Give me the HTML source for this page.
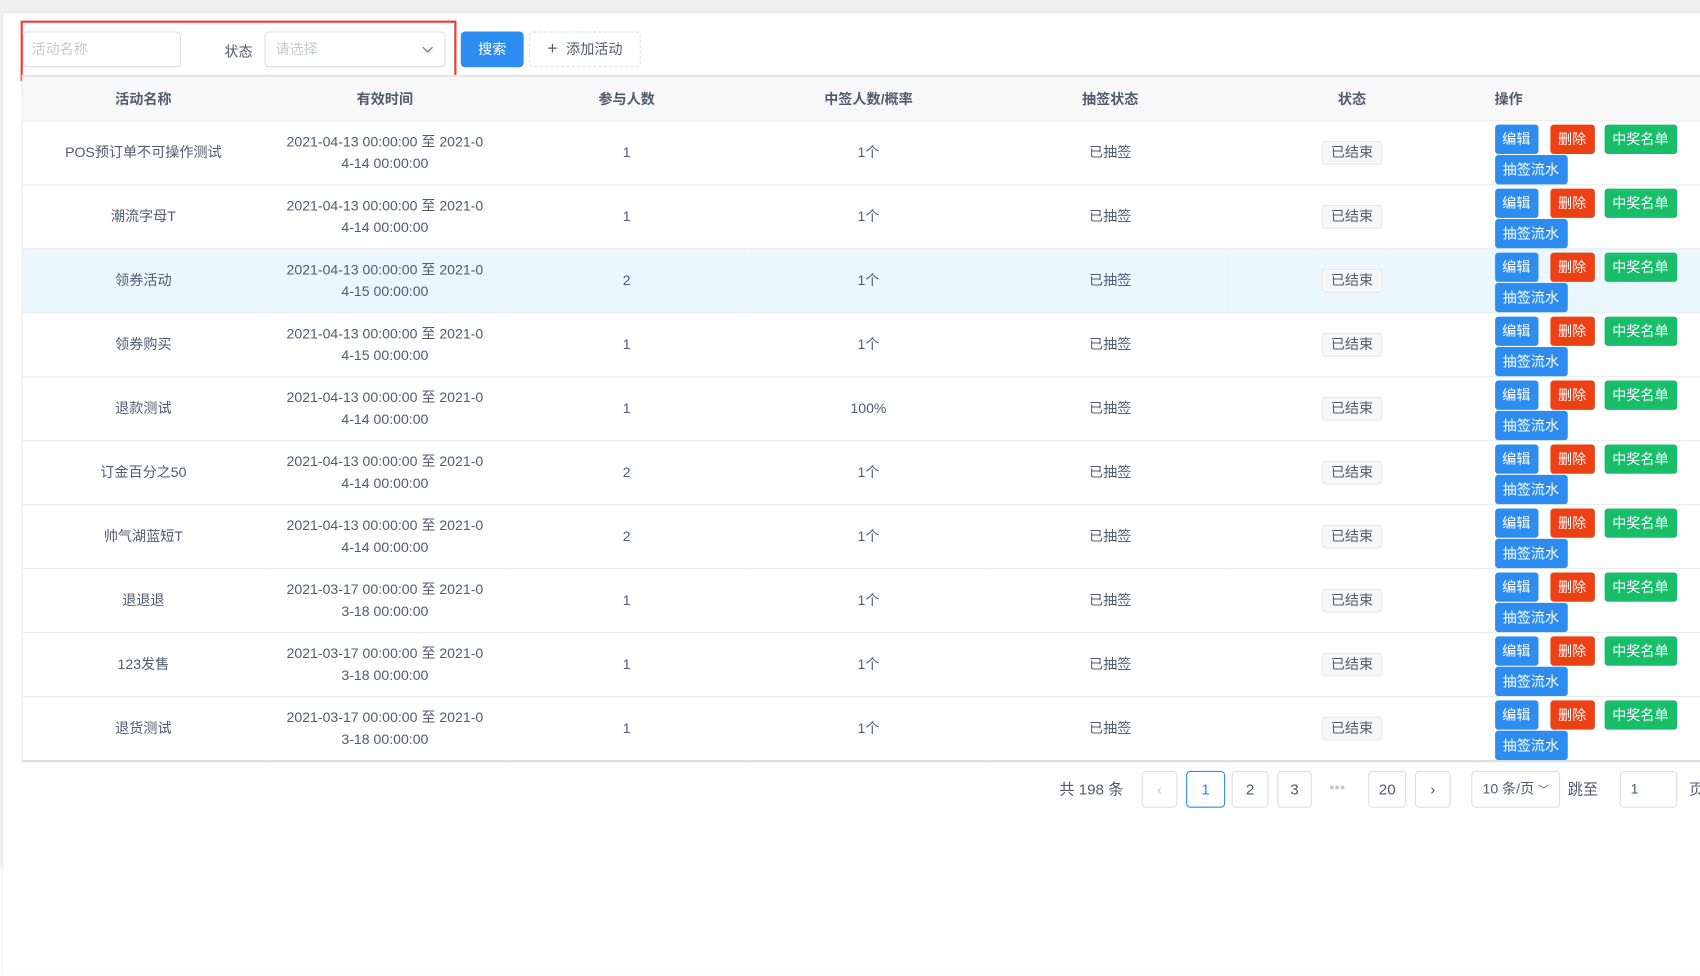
<!DOCTYPE html>
<html><head><meta charset="utf-8"><style>
*{box-sizing:border-box;margin:0;padding:0}
html,body{width:1700px;height:815px;overflow:hidden;background:#fff}
body{font-family:"Liberation Sans","Noto Sans CJK SC",sans-serif;font-size:13px;color:#515a6e}
#w{position:absolute;left:0;top:0;width:1568px;height:800px;transform:scale(1.0842);transform-origin:0 0;background:#f0f0f0}
.card{position:absolute;left:3px;top:12px;right:-200px;bottom:-100px;background:#fff;box-shadow:0 0 3px rgba(0,0,0,.1)}
.abs{position:absolute}
.inp{position:absolute;border:1px solid #dcdee2;border-radius:4px;background:#fff;color:#c5c8ce;font-size:13px;line-height:31px;padding-left:7px}
.red{position:absolute;left:19px;top:19px;width:402px;height:56px;border:2px solid #f03a3a}
table{position:absolute;left:20px;top:69px;border-collapse:collapse;table-layout:fixed;border-left:1px solid #e8eaec;border-bottom:2px solid #dcdee2;width:1680px}
th{height:41px;background:#f8f8f9;font-weight:bold;color:#515a6e;border-top:2px solid #e4e5e7;border-bottom:1px solid #e8eaec;text-align:center;font-size:13px}
td{height:57.9px;border-bottom:1px solid #e8eaec;text-align:center;line-height:20px;font-size:13px}
tr.hl td{background:#ebf7ff}
td.op{text-align:left;vertical-align:top;padding:3px 0 0 20px;line-height:normal}
.b{display:inline-block;height:27px;line-height:27px;color:#fff;border-radius:3px;font-size:13px;text-align:center;vertical-align:top}
.e{background:#2d8cf0;width:40px;margin-right:11px}
.d{background:#ed4014;width:41px;margin-right:9px}
.w{background:#19be6b;width:67px}
.f{background:#2d8cf0;width:67px;margin-top:1px}
.tag{display:inline-block;height:22px;line-height:20px;padding:0 7px;background:#f7f7f7;border:1px solid #e8eaec;border-radius:3px;font-size:13px}
.pg{position:absolute;top:711px;height:34px;border:1px solid #dcdee2;border-radius:4px;text-align:center;line-height:32px;font-size:14px;color:#515a6e;background:#fff}
</style></head><body><div id="w">
<div class="card"></div>
<div class="inp" style="left:21px;top:29px;width:146px;height:33px">活动名称</div>
<div class="abs" style="left:207px;top:37px">状态</div>
<div class="inp" style="left:244px;top:29px;width:167px;height:33px;padding-left:9px">请选择
<svg style="position:absolute;right:10px;top:12px" width="11" height="8" viewBox="0 0 11 8"><path d="M1 1.5L5.5 6L10 1.5" fill="none" stroke="#808695" stroke-width="1.3"/></svg></div>
<div class="red"></div>
<div class="abs" style="left:425px;top:29px;width:58px;height:33px;background:#2d8cf0;border-radius:4px;color:#fff;text-align:center;line-height:33px">搜索</div>
<div class="abs" style="left:488px;top:29px;width:103px;height:33px;border:1px dashed #dcdee2;border-radius:4px;text-align:center;line-height:31px"><span style="font-size:16px;margin-right:8px">+</span>添加活动</div>
<table>
<colgroup><col style="width:223px"><col style="width:223px"><col style="width:223px"><col style="width:223px"><col style="width:223px"><col style="width:223px"><col></colgroup>
<tr><th>活动名称</th><th>有效时间</th><th>参与人数</th><th>中签人数/概率</th><th>抽签状态</th><th>状态</th><th style="text-align:left;padding-left:20px">操作</th></tr>
<tr><td>POS预订单不可操作测试</td><td>2021-04-13 00:00:00 至 2021-0<br>4-14 00:00:00</td><td>1</td><td>1个</td><td>已抽签</td><td><span class="tag">已结束</span></td><td class="op"><span class="b e">编辑</span><span class="b d">删除</span><span class="b w">中奖名单</span><br><span class="b f">抽签流水</span></td></tr>
<tr><td>潮流字母T</td><td>2021-04-13 00:00:00 至 2021-0<br>4-14 00:00:00</td><td>1</td><td>1个</td><td>已抽签</td><td><span class="tag">已结束</span></td><td class="op"><span class="b e">编辑</span><span class="b d">删除</span><span class="b w">中奖名单</span><br><span class="b f">抽签流水</span></td></tr>
<tr class="hl"><td>领券活动</td><td>2021-04-13 00:00:00 至 2021-0<br>4-15 00:00:00</td><td>2</td><td>1个</td><td>已抽签</td><td><span class="tag">已结束</span></td><td class="op"><span class="b e">编辑</span><span class="b d">删除</span><span class="b w">中奖名单</span><br><span class="b f">抽签流水</span></td></tr>
<tr><td>领券购买</td><td>2021-04-13 00:00:00 至 2021-0<br>4-15 00:00:00</td><td>1</td><td>1个</td><td>已抽签</td><td><span class="tag">已结束</span></td><td class="op"><span class="b e">编辑</span><span class="b d">删除</span><span class="b w">中奖名单</span><br><span class="b f">抽签流水</span></td></tr>
<tr><td>退款测试</td><td>2021-04-13 00:00:00 至 2021-0<br>4-14 00:00:00</td><td>1</td><td>100%</td><td>已抽签</td><td><span class="tag">已结束</span></td><td class="op"><span class="b e">编辑</span><span class="b d">删除</span><span class="b w">中奖名单</span><br><span class="b f">抽签流水</span></td></tr>
<tr><td>订金百分之50</td><td>2021-04-13 00:00:00 至 2021-0<br>4-14 00:00:00</td><td>2</td><td>1个</td><td>已抽签</td><td><span class="tag">已结束</span></td><td class="op"><span class="b e">编辑</span><span class="b d">删除</span><span class="b w">中奖名单</span><br><span class="b f">抽签流水</span></td></tr>
<tr><td>帅气湖蓝短T</td><td>2021-04-13 00:00:00 至 2021-0<br>4-14 00:00:00</td><td>2</td><td>1个</td><td>已抽签</td><td><span class="tag">已结束</span></td><td class="op"><span class="b e">编辑</span><span class="b d">删除</span><span class="b w">中奖名单</span><br><span class="b f">抽签流水</span></td></tr>
<tr><td>退退退</td><td>2021-03-17 00:00:00 至 2021-0<br>3-18 00:00:00</td><td>1</td><td>1个</td><td>已抽签</td><td><span class="tag">已结束</span></td><td class="op"><span class="b e">编辑</span><span class="b d">删除</span><span class="b w">中奖名单</span><br><span class="b f">抽签流水</span></td></tr>
<tr><td>123发售</td><td>2021-03-17 00:00:00 至 2021-0<br>3-18 00:00:00</td><td>1</td><td>1个</td><td>已抽签</td><td><span class="tag">已结束</span></td><td class="op"><span class="b e">编辑</span><span class="b d">删除</span><span class="b w">中奖名单</span><br><span class="b f">抽签流水</span></td></tr>
<tr><td>退货测试</td><td>2021-03-17 00:00:00 至 2021-0<br>3-18 00:00:00</td><td>1</td><td>1个</td><td>已抽签</td><td><span class="tag">已结束</span></td><td class="op"><span class="b e">编辑</span><span class="b d">删除</span><span class="b w">中奖名单</span><br><span class="b f">抽签流水</span></td></tr>
</table>
<div class="abs" style="left:977px;top:718px;font-size:14px">共 198 条</div>
<div class="pg" style="left:1053px;width:33px;color:#c5c8ce">‹</div>
<div class="pg" style="left:1094px;width:36px;border-color:#2d8cf0;color:#2d8cf0">1</div>
<div class="pg" style="left:1136px;width:34px">2</div>
<div class="pg" style="left:1178px;width:32px">3</div>
<div class="abs" style="left:1226px;top:718px;color:#c5c8ce;font-size:14px">•••</div>
<div class="pg" style="left:1262px;width:35px">20</div>
<div class="pg" style="left:1305px;width:33px">›</div>
<div class="pg" style="left:1357px;width:82px;font-size:13px">10 条/页 <span style="font-size:10px">﹀</span></div>
<div class="abs" style="left:1446px;top:718px;font-size:14px">跳至</div>
<div class="pg" style="left:1494px;width:53px;text-align:left;padding-left:9px;font-size:13px">1</div>
<div class="abs" style="left:1558px;top:718px;font-size:14px">页</div>
</div></body></html>
